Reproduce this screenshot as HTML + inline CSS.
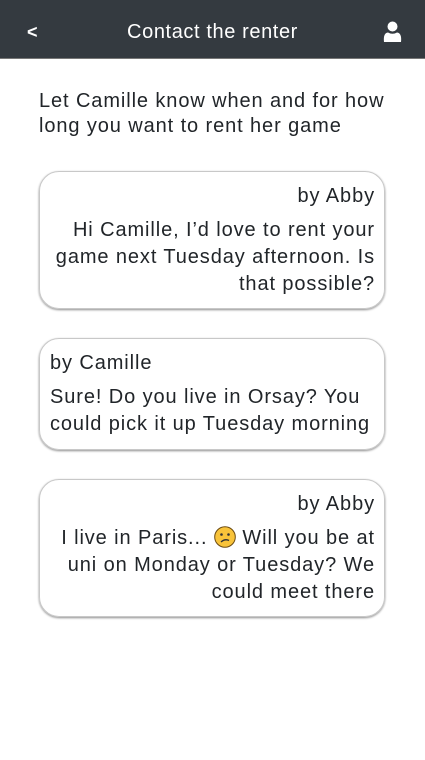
<!DOCTYPE html>
<html><head><meta charset="utf-8"><style>
*{margin:0;padding:0;box-sizing:border-box}
body{width:425px;height:760px;background:#fff;font-family:"Liberation Sans",sans-serif;color:#212529;position:relative;overflow:hidden}
.hdr{height:59px;background:#343a40;border-bottom:1px solid #777;position:relative;color:#fff}
.hdr .t{position:absolute;left:0;right:0;top:21px;text-align:center;font-size:20px;letter-spacing:0.6px}
.hdr .b{position:absolute;left:27px;top:22px;font-size:18px;font-weight:bold}
.intro{position:absolute;left:39px;top:89px;font-size:20px;letter-spacing:0.9px;line-height:25px;width:360px}
.box{position:absolute;left:39px;width:346px;border:1px solid #c8c8c8;border-radius:20px;box-shadow:0 1px 2px rgba(0,0,0,.45);padding:11px 9px 0 10px;font-size:20px;letter-spacing:0.9px;line-height:27px}
.r{text-align:right}
.by{margin-bottom:7px;line-height:27px}
</style></head><body>
<div class="hdr"><span class="b">&lt;</span><div class="t">Contact the renter</div>
<svg style="position:absolute;left:383px;top:21px" width="19" height="21" viewBox="0 0 19 21"><circle cx="9.5" cy="5.5" r="5" fill="#fff"/><path d="M1 21 Q0 12 5 11.5 Q9.5 14 14 11.5 Q19 12 18 21Z" fill="#fff"/></svg></div>
<div class="intro">Let Camille know when and for how long you want to rent her game</div>
<div class="box r" style="top:171px;height:138px"><div class="by">by Abby</div>Hi Camille, I’d love to rent your game next Tuesday afternoon. Is that possible?</div>
<div class="box" style="top:338px;height:112px"><div class="by">by Camille</div>Sure! Do you live in Orsay? You could pick it up Tuesday morning</div>
<div class="box r" style="top:479px;height:138px"><div class="by">by Abby</div>I live in Paris... <svg width="22" height="22" viewBox="0 0 22 22" style="vertical-align:-4px"><circle cx="11" cy="11" r="10.3" fill="#f8c33a" stroke="#6b4a10" stroke-width="1"/><circle cx="7.5" cy="8.5" r="1.3" fill="#333"/><circle cx="14.5" cy="8.5" r="1.3" fill="#333"/><path d="M7 16 Q11 12.5 15 14.5" stroke="#333" stroke-width="1.4" fill="none"/></svg> Will you be at uni on Monday or Tuesday? We could meet there</div>
</body></html>
